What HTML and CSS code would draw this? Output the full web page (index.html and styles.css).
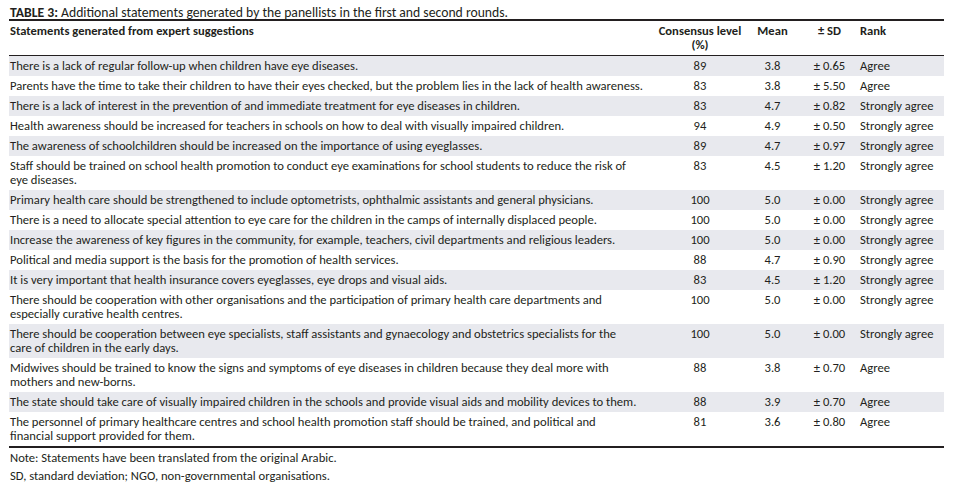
FILE: index.html
```html
<!DOCTYPE html>
<html lang="en">
<head>
<meta charset="utf-8">
<title>Table 3</title>
<link rel="stylesheet" href="styles.css">
</head>
<body>
<div class="wrap">
  <div class="caption"><span class="label">TABLE 3:</span> Additional statements generated by the panellists in the first and second rounds.</div>
  <table class="data">
    <colgroup>
      <col class="c-stmt"><col class="c-cons"><col class="c-mean"><col class="c-sd"><col class="c-rank">
    </colgroup>
    <thead>
      <tr>
        <th class="stmt">Statements generated from expert suggestions</th>
        <th class="num">Consensus level<br>(%)</th>
        <th class="num">Mean</th>
        <th class="num">± SD</th>
        <th class="rank">Rank</th>
      </tr>
    </thead>
    <tbody>
      <tr class="alt"><td>There is a lack of regular follow-up when children have eye diseases.</td><td class="num">89</td><td class="num">3.8</td><td class="num">± 0.65</td><td>Agree</td></tr>
      <tr><td>Parents have the time to take their children to have their eyes checked, but the problem lies in the lack of health awareness.</td><td class="num">83</td><td class="num">3.8</td><td class="num">± 5.50</td><td>Agree</td></tr>
      <tr class="alt"><td>There is a lack of interest in the prevention of and immediate treatment for eye diseases in children.</td><td class="num">83</td><td class="num">4.7</td><td class="num">± 0.82</td><td>Strongly agree</td></tr>
      <tr><td>Health awareness should be increased for teachers in schools on how to deal with visually impaired children.</td><td class="num">94</td><td class="num">4.9</td><td class="num">± 0.50</td><td>Strongly agree</td></tr>
      <tr class="alt"><td>The awareness of schoolchildren should be increased on the importance of using eyeglasses.</td><td class="num">89</td><td class="num">4.7</td><td class="num">± 0.97</td><td>Strongly agree</td></tr>
      <tr><td>Staff should be trained on school health promotion to conduct eye examinations for school students to reduce the risk of<br>eye diseases.</td><td class="num">83</td><td class="num">4.5</td><td class="num">± 1.20</td><td>Strongly agree</td></tr>
      <tr class="alt"><td>Primary health care should be strengthened to include optometrists, ophthalmic assistants and general physicians.</td><td class="num">100</td><td class="num">5.0</td><td class="num">± 0.00</td><td>Strongly agree</td></tr>
      <tr><td>There is a need to allocate special attention to eye care for the children in the camps of internally displaced people.</td><td class="num">100</td><td class="num">5.0</td><td class="num">± 0.00</td><td>Strongly agree</td></tr>
      <tr class="alt"><td>Increase the awareness of key figures in the community, for example, teachers, civil departments and religious leaders.</td><td class="num">100</td><td class="num">5.0</td><td class="num">± 0.00</td><td>Strongly agree</td></tr>
      <tr><td>Political and media support is the basis for the promotion of health services.</td><td class="num">88</td><td class="num">4.7</td><td class="num">± 0.90</td><td>Strongly agree</td></tr>
      <tr class="alt"><td>It is very important that health insurance covers eyeglasses, eye drops and visual aids.</td><td class="num">83</td><td class="num">4.5</td><td class="num">± 1.20</td><td>Strongly agree</td></tr>
      <tr><td>There should be cooperation with other organisations and the participation of primary health care departments and<br>especially curative health centres.</td><td class="num">100</td><td class="num">5.0</td><td class="num">± 0.00</td><td>Strongly agree</td></tr>
      <tr class="alt"><td>There should be cooperation between eye specialists, staff assistants and gynaecology and obstetrics specialists for the<br>care of children in the early days.</td><td class="num">100</td><td class="num">5.0</td><td class="num">± 0.00</td><td>Strongly agree</td></tr>
      <tr><td>Midwives should be trained to know the signs and symptoms of eye diseases in children because they deal more with<br>mothers and new-borns.</td><td class="num">88</td><td class="num">3.8</td><td class="num">± 0.70</td><td>Agree</td></tr>
      <tr class="alt"><td>The state should take care of visually impaired children in the schools and provide visual aids and mobility devices to them.</td><td class="num">88</td><td class="num">3.9</td><td class="num">± 0.70</td><td>Agree</td></tr>
      <tr><td>The personnel of primary healthcare centres and school health promotion staff should be trained, and political and<br>financial support provided for them.</td><td class="num">81</td><td class="num">3.6</td><td class="num">± 0.80</td><td>Agree</td></tr>
    </tbody>
  </table>
  <p class="note">Note: Statements have been translated from the original Arabic.</p>
  <p class="note">SD, standard deviation; NGO, non-governmental organisations.</p>
</div>
</body>
</html>
```

FILE: styles.css
```css
* { box-sizing: border-box; }
html, body { margin: 0; padding: 0; background: #ffffff; }
body {
  font-family: Carlito, Lato, "Liberation Sans", sans-serif;
  color: #231f20;
  font-size: 12.6px;
  line-height: 14px;
}
.wrap {
  width: 935px;
  margin-left: 9px;
  padding-top: 6px;
}
.caption {
  font-size: 13.7px;
  line-height: 13px;
  padding-left: 1px;
  border-bottom: 2px solid #231f20;
}
.caption .label { font-weight: bold; }
.data {
  width: 100%;
  border-collapse: collapse;
  table-layout: fixed;
  border-bottom: 2px solid #231f20;
}
.c-stmt { width: 646px; }
.c-cons { width: 90px; }
.c-mean { width: 55px; }
.c-sd { width: 59px; }
.c-rank { width: 85px; }
.data th {
  font-weight: bold;
  text-align: left;
  vertical-align: top;
  padding: 3px 1px 3px 1px;
  height: 34px;
  line-height: 14px;
  border-bottom: 1px solid #231f20;
  white-space: nowrap;
}
.data th.num { text-align: center; }
.data td {
  vertical-align: top;
  padding: 3px 1px 3px 1px;
  white-space: nowrap;
}
.data td.num { text-align: center; }
.data tr.alt td { background: #e8e9ee; }
.note {
  margin: 3px 0 0 1px;
  line-height: 14px;
}
.note + .note { margin-top: 4px; }
```
